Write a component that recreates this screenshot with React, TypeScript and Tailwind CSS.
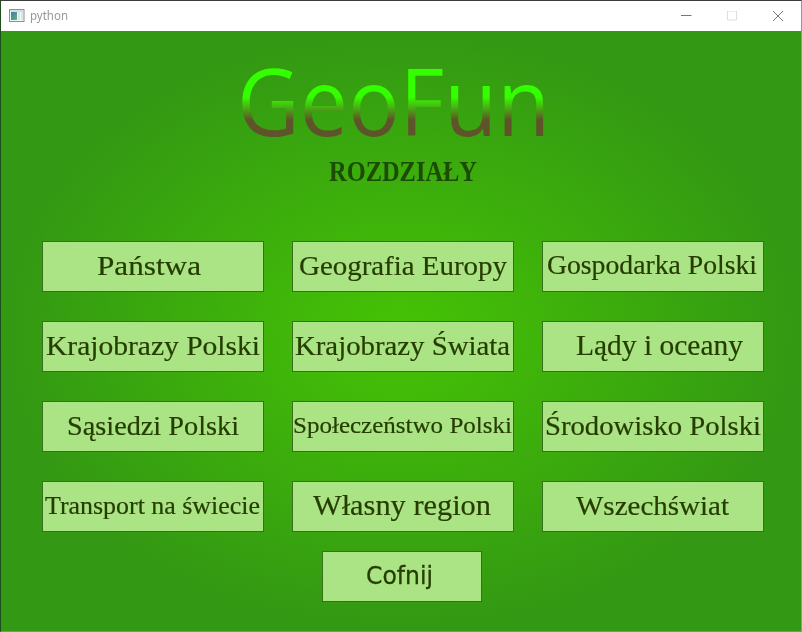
import { useLayoutEffect, useRef } from "react";

type Label = { text: string; x: number; y: number; width: number; size: number };

const serif = "font-['Liberation_Serif',serif]";

// x: left inset of the ink, y: baseline inside the button
const chapters: Label[] = [
  { text: "Państwa", x: 54, y: 33, width: 104, size: 28 },
  { text: "Geografia Europy", x: 6, y: 34, width: 208, size: 27.5 },
  { text: "Gospodarka Polski", x: 4, y: 33, width: 210, size: 27 },
  { text: "Krajobrazy Polski", x: 3, y: 33, width: 214, size: 28 },
  { text: "Krajobrazy Świata", x: 2, y: 33, width: 215, size: 28 },
  { text: "Lądy i oceany", x: 33, y: 33, width: 167, size: 28.5 },
  { text: "Sąsiedzi Polski", x: 24, y: 34, width: 172, size: 27.5 },
  { text: "Społeczeństwo Polski", x: 0, y: 31, width: 219, size: 24 },
  { text: "Środowisko Polski", x: 2, y: 34, width: 216, size: 27.5 },
  { text: "Transport na świecie", x: 2, y: 32, width: 215, size: 24.5 },
  { text: "Własny region", x: 20, y: 33, width: 178, size: 28.5 },
  { text: "Wszechświat", x: 33, y: 34, width: 153, size: 27.5 },
];

function FitText({ text, x, y, width, size, ascent = 0.891, descent = 0.216, className = "" }: Label & { ascent?: number; descent?: number; className?: string }) {
  const ref = useRef<HTMLSpanElement>(null);
  useLayoutEffect(() => {
    const el = ref.current;
    if (el) el.style.transform = `scaleX(${width / el.getBoundingClientRect().width})`;
  }, []);
  return (
    <span
      ref={ref}
      className={`block w-max shrink-0 origin-left whitespace-pre ${className}`}
      style={{ fontSize: size, lineHeight: `${size * (ascent + descent)}px`, marginLeft: x, marginTop: y - size * ascent }}
    >
      {text}
    </span>
  );
}

const box = "flex h-[51px] items-start border border-[#39701c] bg-[#abe485] text-[#263d00]";

export default function App() {
  return (
    <div className="flex h-[632px] w-[802px] flex-col overflow-hidden border border-t-[#3d3b40] border-r-[#78ad68] border-b-[#65a653] border-l-[#1d4d1a] bg-white">
      <header className="flex h-[30px] shrink-0 items-center pl-2 font-['Noto_Sans',sans-serif]">
        <svg width="16" height="14" viewBox="0 0 16 14" className="mt-[-1px]">
          <defs>
            <linearGradient id="screen" x1="0" y1="0" x2="1" y2="1">
              <stop stopColor="#447f9e" />
              <stop offset="1" stopColor="#56b388" />
            </linearGradient>
          </defs>
          <rect x=".5" y=".5" width="14.5" height="12" fill="#f5f6f8" stroke="#8c9196" />
          <path d="M1 2h13.5" stroke="#bcc4ca" />
          <rect x="2" y="3" width="6" height="8" fill="url(#screen)" />
          <path d="M9 3h2v8H9zM12 3h2v8h-2z" fill="#dfe3ea" />
        </svg>
        <FitText text="python" x={5} y={13} width={38} size={12} ascent={1.069} descent={0.293} className="text-[#999]" />
        <div className="ml-auto flex items-center gap-[35px] pr-[17px]">
          <svg width="11" height="11"><path d="M0 4.5h10.5" stroke="#777" /></svg>
          <svg width="11" height="11"><path d="M.5 0h9v9h-9z" fill="none" stroke="#dedede" /></svg>
          <svg width="11" height="11"><path d="M0 0l10 10M10 0l-10 10" stroke="#777" /></svg>
        </div>
      </header>
      <main className="flex grow flex-col bg-[radial-gradient(ellipse_400px_300px_at_400px_300px,#45c305,#339813)]">
        <h1 className="flex h-[120px] shrink-0 items-start">
          <FitText
            text="GeoFun" x={236} y={105} width={313} size={93.5} ascent={0.869} descent={0.093}
            className="bg-[linear-gradient(#33ff00_0_42px,#5f5329_65px)] bg-clip-text font-['Open_Sans',sans-serif] font-normal text-transparent"
          />
        </h1>
        <h2 className="flex h-[90px] shrink-0 items-start">
          <FitText text="ROZDZIAŁY" x={328} y={30} width={148} size={30} className={`${serif} font-bold text-[#1c4b04]`} />
        </h2>
        <div className="ml-[41px] grid grid-cols-[repeat(3,222px)] gap-x-7 gap-y-[29px]">
          {chapters.map((c) => (
            <button key={c.text} className={`${box} ${serif} [-webkit-text-stroke:0.2px_#263d00]`}>
              <FitText {...c} />
            </button>
          ))}
        </div>
        <button className={`${box} mt-[19px] ml-[321px] w-[160px] font-['DejaVu_Sans',sans-serif] [-webkit-text-stroke:0.3px_#263d00]`}>
          <FitText text="Cofnij" x={43} y={32} width={67} size={25} ascent={0.928} descent={0.236} />
        </button>
      </main>
    </div>
  );
}
